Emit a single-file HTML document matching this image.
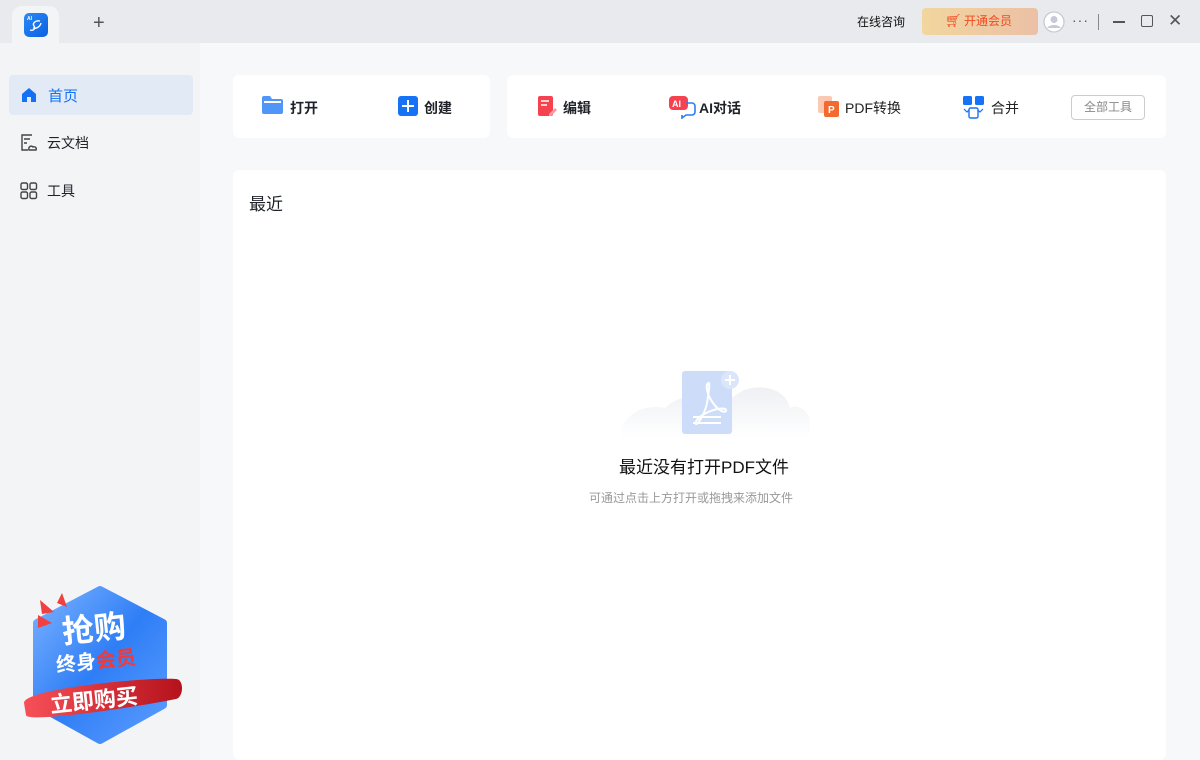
<!DOCTYPE html>
<html><head><meta charset="utf-8"><style>
*{margin:0;padding:0;box-sizing:border-box}
body{width:1200px;height:760px;overflow:hidden;background:#f7f8fa;font-family:"Liberation Sans","Noto Sans CJK SC",sans-serif;position:relative;color:#1f2329}
.abs{position:absolute}
.tb{left:0;top:0;width:1200px;height:43px;background:#e8eaee}
.tab{left:12px;top:6px;width:47px;height:37px;background:#f3f4f6;border-radius:10px 10px 0 0}
.side{left:0;top:43px;width:200px;height:717px;background:#f3f4f6}
.card{background:#fff;border-radius:6px}
.t{font-size:14px;white-space:nowrap;line-height:1.2}
</style></head><body>
<div class="abs tb"></div>
<div class="abs tab"></div>
<div class="abs" style="left:24px;top:13px;width:24px;height:24px;border-radius:5px;background:linear-gradient(135deg,#2a8af6,#0b5fe0)">
<svg width="24" height="24"><text x="3" y="7" font-size="5" fill="#fff" font-weight="bold" font-family="Liberation Sans">AI</text><path d="M16 8c-4-1-8 2-6 5s-1 5-4 4M9 15c3 1 7-1 8-5" stroke="#fff" stroke-width="1.4" fill="none"/></svg></div>
<div class="abs" style="left:93px;top:12px;font-size:20px;color:#555">+</div>
<div class="abs t" style="left:857px;top:15px;font-size:12px;color:#111">在线咨询</div>
<div class="abs" style="left:922px;top:8px;width:116px;height:27px;border-radius:4px;background:linear-gradient(90deg,#f1d69e,#ecc0a6)"></div>
<div class="abs t" style="left:945px;top:13px;font-size:13px;color:#f04a20">🛒︎</div>
<div class="abs t" style="left:964px;top:14px;font-size:12px;color:#f04a20">开通会员</div>
<svg class="abs" style="left:1043px;top:11px" width="22" height="22"><circle cx="11" cy="11" r="10" fill="#fff" stroke="#c4cad6" stroke-width="1.3"/><circle cx="11" cy="8.5" r="3.5" fill="#c4cad6"/><path d="M4 17c3-4 11-4 14 0" fill="#c4cad6"/></svg>
<div class="abs t" style="left:1072px;top:12px;font-size:14px;color:#555;letter-spacing:1px">···</div>
<div class="abs" style="left:1098px;top:14px;width:1px;height:16px;background:#888"></div>
<div class="abs" style="left:1113px;top:21px;width:12px;height:1.5px;background:#555"></div>
<div class="abs" style="left:1141px;top:15px;width:12px;height:12px;border:1.5px solid #555;border-radius:2px"></div>
<div class="abs t" style="left:1168px;top:11px;font-size:17px;color:#555">✕</div>

<div class="abs side"></div>
<div class="abs" style="left:9px;top:75px;width:184px;height:40px;background:#e2eaf6;border-radius:4px"></div>
<svg class="abs" style="left:21px;top:87px" width="16" height="16"><path d="M1 7L8 1l7 6v8H10v-5H6v5H1z" fill="#1470f5"/></svg>
<div class="abs t" style="left:48px;top:88px;font-size:15px;color:#1470f5">首页</div>
<svg class="abs" style="left:20px;top:134px" width="18" height="18" fill="none" stroke="#444" stroke-width="1.4"><path d="M12 1H2v15h6M4 5h6M4 9h3"/><path d="M9 16c-1-3 2-5 4-3 2-1 4 1 3 3z"/></svg>
<div class="abs t" style="left:47px;top:135px;font-size:14px">云文档</div>
<svg class="abs" style="left:20px;top:182px" width="18" height="18" fill="none" stroke="#444" stroke-width="1.4"><rect x="1" y="1" width="6.5" height="6.5" rx="1.5"/><rect x="10" y="1" width="6.5" height="6.5" rx="1.5"/><rect x="1" y="10" width="6.5" height="6.5" rx="1.5"/><rect x="10" y="10" width="6.5" height="6.5" rx="1.5"/></svg>
<div class="abs t" style="left:47px;top:183px;font-size:14px">工具</div>

<!-- promo -->
<svg class="abs" style="left:20px;top:585px" width="165" height="160">
<defs><linearGradient id="g" x1="0" y1="0" x2="1" y2="1"><stop offset="0" stop-color="#7ab2ff"/><stop offset=".5" stop-color="#2f7ef6"/><stop offset="1" stop-color="#5b9cff"/></linearGradient>
<linearGradient id="r" x1="0" x2="1"><stop offset="0" stop-color="#f75058"/><stop offset="1" stop-color="#b5121c"/></linearGradient></defs>
<path d="M80 5L143 38V120L80 155L17 120V38z" fill="url(#g)" stroke="url(#g)" stroke-width="8" stroke-linejoin="round"/>
<path d="M20 15l14 12-12 2zM42 8l5 14-10-4zM18 30l14 8-14 5z" fill="#f04040"/>
<path d="M4 118c0-14 120-26 152-24 8 0 8 18 0 20-50 10-150 24-150 16z" fill="url(#r)"/>
</svg>
<div class="abs t" style="left:62px;top:610px;font-size:32px;font-weight:bold;color:#fff;transform:rotate(-6deg)">抢购</div>
<div class="abs t" style="left:56px;top:650px;font-size:20px;font-weight:bold;color:#fff;transform:rotate(-6deg)">终身<span style="color:#f03a3a">会员</span></div>
<div class="abs t" style="left:50px;top:688px;font-size:22px;font-weight:bold;color:#fff;transform:rotate(-6deg)">立即购买</div>

<!-- toolbar cards -->
<div class="abs card" style="left:233px;top:75px;width:257px;height:63px"></div>
<div class="abs card" style="left:507px;top:75px;width:659px;height:63px"></div>
<svg class="abs" style="left:261px;top:95px" width="23" height="20"><path d="M1 3a2 2 0 012-2h6l2 3h9a2 2 0 012 2v11a2 2 0 01-2 2H3a2 2 0 01-2-2z" fill="#4f96f8"/><rect x="3" y="6" width="17" height="2" fill="#fff"/></svg>
<div class="abs t" style="left:290px;top:100px;font-weight:bold">打开</div>
<svg class="abs" style="left:398px;top:96px" width="20" height="20"><rect width="20" height="20" rx="3" fill="#1673f5"/><path d="M10 4v12M4 10h12" stroke="#fff" stroke-width="2"/></svg>
<div class="abs t" style="left:424px;top:100px;font-weight:bold">创建</div>
<svg class="abs" style="left:538px;top:96px" width="20" height="22"><rect width="15" height="20" rx="2" fill="#f5424e"/><path d="M3 5h8M3 9h6" stroke="#fff" stroke-width="1.6"/><path d="M11 18l6-6 2 2-6 6h-2z" fill="#f99ca2"/></svg>
<div class="abs t" style="left:563px;top:100px;font-weight:bold">编辑</div>
<svg class="abs" style="left:668px;top:95px" width="30" height="24"><rect x="1" y="1" width="19" height="14" rx="4" fill="#f5424e"/><text x="4" y="12" font-size="9" font-weight="bold" fill="#fff" font-family="Liberation Sans">AI</text><path d="M18 8h6a3 3 0 013 3v6a3 3 0 01-3 3h-6l-4 3v-3" stroke="#2b7df5" stroke-width="1.6" fill="none"/></svg>
<div class="abs t" style="left:699px;top:100px;font-weight:bold">AI对话</div>
<svg class="abs" style="left:818px;top:96px" width="22" height="22"><rect x="0" y="0" width="14" height="17" rx="2" fill="#fbc9b3"/><rect x="6" y="5" width="15" height="16" rx="2" fill="#f46a2e"/><text x="10" y="17" font-size="10" font-weight="bold" fill="#fff" font-family="Liberation Sans">P</text></svg>
<div class="abs t" style="left:845px;top:100px;color:#222">PDF转换</div>
<svg class="abs" style="left:962px;top:95px" width="24" height="24"><rect x="1" y="1" width="9" height="9" rx="1.5" fill="#1673f5"/><rect x="13" y="1" width="9" height="9" rx="1.5" fill="#1673f5"/><rect x="7" y="13" width="9" height="10" rx="1.5" fill="none" stroke="#1673f5" stroke-width="1.4"/><path d="M2 14l3 3 2-2M21 14l-3 3-2-2" stroke="#1673f5" stroke-width="1.2" fill="none"/></svg>
<div class="abs t" style="left:991px;top:100px;color:#222">合并</div>
<div class="abs" style="left:1071px;top:95px;width:74px;height:25px;border:1px solid #ccc;border-radius:4px;font-size:12px;color:#888;text-align:center;line-height:23px">全部工具</div>

<!-- recent -->
<div class="abs card" style="left:233px;top:170px;width:933px;height:590px"></div>
<div class="abs t" style="left:249px;top:195px;font-size:17px">最近</div>
<svg class="abs" style="left:615px;top:368px" width="195" height="75">
<defs><linearGradient id="c" x1="0" y1="0" x2="0" y2="1"><stop offset="0" stop-color="#eef0f4"/><stop offset="1" stop-color="#fff"/></linearGradient></defs>
<path d="M5 70c0-20 20-35 45-30 15-15 40-15 60 0 15-30 60-25 65 0 10-5 25 5 20 30z" fill="url(#c)"/>
<rect x="67" y="3" width="50" height="63" rx="3" fill="#cddcf8"/>
<circle cx="115" cy="12" r="9" fill="#dbe6fa"/><path d="M115 7v10M110 12h10" stroke="#fff" stroke-width="2"/>
<path d="M94 15c-4 0-3 10 4 20s14 10 13 7-12-1-20 3-12 10-10 11 8-10 10-17 4-24 3-24z" stroke="#fff" stroke-width="2" fill="none"/>
<path d="M78 49h28M78 55h28" stroke="#fff" stroke-width="2"/>
</svg>
<div class="abs t" style="left:619px;top:458px;font-size:17px;color:#111">最近没有打开PDF文件</div>
<div class="abs t" style="left:589px;top:491px;font-size:12px;color:#999">可通过点击上方打开或拖拽来添加文件</div>
</body></html>
